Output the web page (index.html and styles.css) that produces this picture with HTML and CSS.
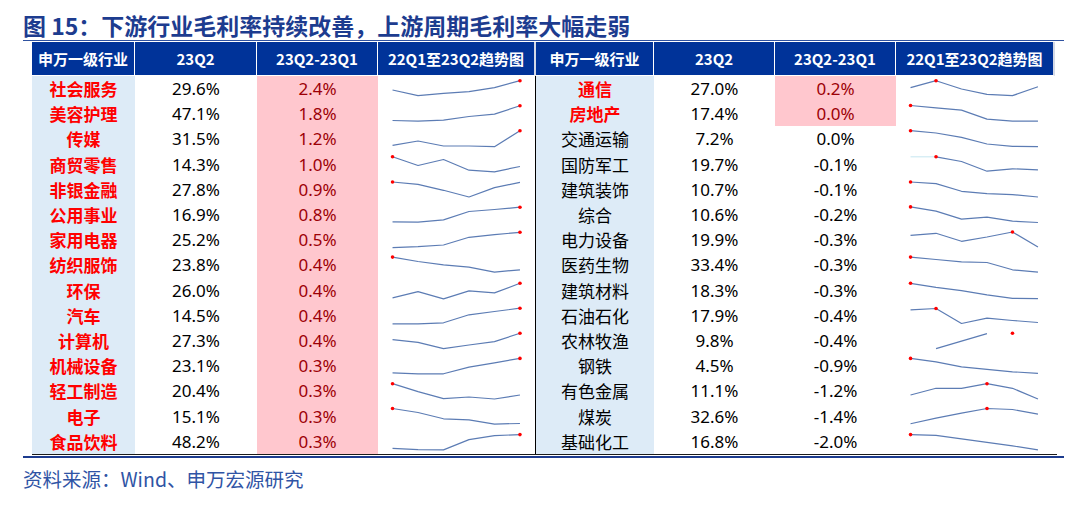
FILE: index.html
```html
<!DOCTYPE html>
<html lang="zh-CN">
<head>
<meta charset="utf-8">
<title>图 15</title>
<link rel="stylesheet" href="styles.css">
</head>
<body>
<div class="page">
  <h1 class="title">图 15：下游行业毛利率持续改善，上游周期毛利率大幅走弱</h1>
  <div class="tables">
    <div class="tbl tbl-left">
      <div class="hd">申万一级行业</div><div class="hd">23Q2</div><div class="hd">23Q2-23Q1</div><div class="hd hd-last">22Q1至23Q2趋势图</div>

      <div class="name red">社会服务</div><div class="num">29.6%</div><div class="num pink">2.4%</div>
      <div class="spark"><svg viewBox="0 0 157 25.2"><polyline points="14.5,14 40,19.7 65.5,17.3 91,15.7 116.5,11.7 142,4.7"/><circle cx="142" cy="4.7" r="1.8"/></svg></div>

      <div class="name red">美容护理</div><div class="num">47.1%</div><div class="num pink">1.8%</div>
      <div class="spark"><svg viewBox="0 0 157 25.2"><polyline points="14.5,19.5 40,20.1 65.5,19.1 91,15.5 116.5,13.1 142,4.8"/><circle cx="142" cy="4.8" r="1.8"/></svg></div>

      <div class="name red">传媒</div><div class="num">31.5%</div><div class="num pink">1.2%</div>
      <div class="spark"><svg viewBox="0 0 157 25.2"><polyline points="14.5,19.4 40,15 65.5,20 91,20 116.5,20.7 142,4.7"/><circle cx="142" cy="4.7" r="1.8"/></svg></div>

      <div class="name red">商贸零售</div><div class="num">14.3%</div><div class="num pink">1.0%</div>
      <div class="spark"><svg viewBox="0 0 157 25.2"><polyline points="14.5,4.8 40,13.5 65.5,7.5 91,18.2 116.5,19.8 142,14.5"/><circle cx="14.5" cy="4.8" r="1.8"/></svg></div>

      <div class="name red">非银金融</div><div class="num">27.8%</div><div class="num pink">0.9%</div>
      <div class="spark"><svg viewBox="0 0 157 25.2"><polyline points="14.5,5 40,7.3 65.5,13.3 91,20 116.5,10.6 142,5.3"/><circle cx="14.5" cy="5" r="1.8"/></svg></div>

      <div class="name red">公用事业</div><div class="num">16.9%</div><div class="num pink">0.8%</div>
      <div class="spark"><svg viewBox="0 0 157 25.2"><polyline points="14.5,19.9 40,20.2 65.5,17.9 91,9.5 116.5,7.5 142,5.2"/><circle cx="142" cy="5.2" r="1.8"/></svg></div>

      <div class="name red">家用电器</div><div class="num">25.2%</div><div class="num pink">0.5%</div>
      <div class="spark"><svg viewBox="0 0 157 25.2"><polyline points="14.5,20.7 40,19.7 65.5,18 91,10.3 116.5,7.7 142,5.3"/><circle cx="142" cy="5.3" r="1.8"/></svg></div>

      <div class="name red">纺织服饰</div><div class="num">23.8%</div><div class="num pink">0.4%</div>
      <div class="spark"><svg viewBox="0 0 157 25.2"><polyline points="14.5,5.1 40,9.5 65.5,12.8 91,15.1 116.5,20.1 142,17.8"/><circle cx="14.5" cy="5.1" r="1.8"/></svg></div>

      <div class="name red">环保</div><div class="num">26.0%</div><div class="num pink">0.4%</div>
      <div class="spark"><svg viewBox="0 0 157 25.2"><polyline points="14.5,19.9 40,13.6 65.5,20.9 91,12.9 116.5,14.9 142,5.3"/><circle cx="142" cy="5.3" r="1.8"/></svg></div>

      <div class="name red">汽车</div><div class="num">14.5%</div><div class="num pink">0.4%</div>
      <div class="spark"><svg viewBox="0 0 157 25.2"><polyline points="14.5,20.8 40,20.8 65.5,19.8 91,11.8 116.5,8.5 142,5.2"/><circle cx="142" cy="5.2" r="1.8"/></svg></div>

      <div class="name red">计算机</div><div class="num">27.3%</div><div class="num pink">0.4%</div>
      <div class="spark"><svg viewBox="0 0 157 25.2"><polyline points="14.5,11.6 40,14.3 65.5,20.6 91,17 116.5,13.6 142,5.3"/><circle cx="142" cy="5.3" r="1.8"/></svg></div>

      <div class="name red">机械设备</div><div class="num">23.1%</div><div class="num pink">0.3%</div>
      <div class="spark"><svg viewBox="0 0 157 25.2"><polyline points="14.5,19.8 40,20.8 65.5,20.8 91,14.1 116.5,9.8 142,5.4"/><circle cx="142" cy="5.4" r="1.8"/></svg></div>

      <div class="name red">轻工制造</div><div class="num">20.4%</div><div class="num pink">0.3%</div>
      <div class="spark"><svg viewBox="0 0 157 25.2"><polyline points="14.5,5.7 40,13.7 65.5,20.7 91,19 116.5,21 142,17"/><circle cx="14.5" cy="5.7" r="1.8"/></svg></div>

      <div class="name red">电子</div><div class="num">15.1%</div><div class="num pink">0.3%</div>
      <div class="spark"><svg viewBox="0 0 157 25.2"><polyline points="14.5,5.5 40,9.5 65.5,15.8 91,16.8 116.5,21.1 142,20.5"/><circle cx="14.5" cy="5.5" r="1.8"/></svg></div>

      <div class="name red">食品饮料</div><div class="num">48.2%</div><div class="num pink">0.3%</div>
      <div class="spark"><svg viewBox="0 0 157 25.2"><polyline points="14.5,19.3 40,20.6 65.5,20.9 91,10.6 116.5,6.6 142,5.6"/><circle cx="142" cy="5.6" r="1.8"/></svg></div>
    </div>

    <div class="tbl tbl-right">
      <div class="hd">申万一级行业</div><div class="hd">23Q2</div><div class="hd">23Q2-23Q1</div><div class="hd hd-last">22Q1至23Q2趋势图</div>

      <div class="name red">通信</div><div class="num">27.0%</div><div class="num pink">0.2%</div>
      <div class="spark"><svg viewBox="0 0 157 25.2"><polyline points="14.5,11.7 40,4.7 65.5,13 91,18.3 116.5,19.7 142,10.7"/><circle cx="40" cy="4.7" r="1.8"/></svg></div>

      <div class="name red">房地产</div><div class="num">17.4%</div><div class="num pink">0.0%</div>
      <div class="spark"><svg viewBox="0 0 157 25.2"><polyline points="14.5,4.5 40,6.8 65.5,9.1 91,18.1 116.5,20.1 142,20.1"/><circle cx="14.5" cy="4.5" r="1.8"/></svg></div>

      <div class="name">交通运输</div><div class="num">7.2%</div><div class="num">0.0%</div>
      <div class="spark"><svg viewBox="0 0 157 25.2"><polyline points="14.5,4.7 40,7 65.5,11.4 91,18 116.5,20.4 142,20.7"/><circle cx="14.5" cy="4.7" r="1.8"/></svg></div>

      <div class="name">国防军工</div><div class="num">19.7%</div><div class="num">-0.1%</div>
      <div class="spark"><svg viewBox="0 0 157 25.2"><polyline class="faint" points="14.5,4.8 40,4.8"/><polyline points="40,4.8 65.5,9.5 91,19.2 116.5,16.8 142,17.8"/><circle cx="40" cy="4.8" r="1.8"/></svg></div>

      <div class="name">建筑装饰</div><div class="num">10.7%</div><div class="num">-0.1%</div>
      <div class="spark"><svg viewBox="0 0 157 25.2"><polyline points="14.5,5 40,6.6 65.5,14.3 91,16.6 116.5,17.6 142,20"/><circle cx="14.5" cy="5" r="1.8"/></svg></div>

      <div class="name">综合</div><div class="num">10.6%</div><div class="num">-0.2%</div>
      <div class="spark"><svg viewBox="0 0 157 25.2"><polyline points="14.5,4.9 40,9.2 65.5,17.2 91,15.2 116.5,19.2 142,20.5"/><circle cx="14.5" cy="4.9" r="1.8"/></svg></div>

      <div class="name">电力设备</div><div class="num">19.9%</div><div class="num">-0.3%</div>
      <div class="spark"><svg viewBox="0 0 157 25.2"><polyline points="14.5,8.3 40,6.3 65.5,14.3 91,10 116.5,5 142,20"/><circle cx="116.5" cy="5" r="1.8"/></svg></div>

      <div class="name">医药生物</div><div class="num">33.4%</div><div class="num">-0.3%</div>
      <div class="spark"><svg viewBox="0 0 157 25.2"><polyline points="14.5,5.1 40,7.5 65.5,9.8 91,10.5 116.5,17.8 142,20.1"/><circle cx="14.5" cy="5.1" r="1.8"/></svg></div>

      <div class="name">建筑材料</div><div class="num">18.3%</div><div class="num">-0.3%</div>
      <div class="spark"><svg viewBox="0 0 157 25.2"><polyline points="14.5,5.3 40,9.3 65.5,12.6 91,16.9 116.5,20.3 142,20.6"/><circle cx="14.5" cy="5.3" r="1.8"/></svg></div>

      <div class="name">石油石化</div><div class="num">17.9%</div><div class="num">-0.4%</div>
      <div class="spark"><svg viewBox="0 0 157 25.2"><polyline points="14.5,6.8 40,5.5 65.5,20.5 91,15.2 116.5,17.5 142,19.5"/><circle cx="40" cy="5.5" r="1.8"/></svg></div>

      <div class="name">农林牧渔</div><div class="num">9.8%</div><div class="num">-0.4%</div>
      <div class="spark"><svg viewBox="0 0 157 25.2"><polyline points="40,20.6 65.5,13.1 91,5.6"/><circle cx="116.5" cy="5.3" r="1.8"/></svg></div>

      <div class="name">钢铁</div><div class="num">4.5%</div><div class="num">-0.9%</div>
      <div class="spark"><svg viewBox="0 0 157 25.2"><polyline points="14.5,5.4 40,8.8 65.5,13.8 91,16.4 116.5,18.8 142,20.4"/><circle cx="14.5" cy="5.4" r="1.8"/></svg></div>

      <div class="name">有色金属</div><div class="num">11.1%</div><div class="num">-1.2%</div>
      <div class="spark"><svg viewBox="0 0 157 25.2"><polyline points="14.5,17 40,10.3 65.5,10.3 91,5.7 116.5,10.3 142,21"/><circle cx="91" cy="5.7" r="1.8"/></svg></div>

      <div class="name">煤炭</div><div class="num">32.6%</div><div class="num">-1.4%</div>
      <div class="spark"><svg viewBox="0 0 157 25.2"><polyline points="14.5,20.8 40,15.1 65.5,10.1 91,5.5 116.5,6.5 142,11.1"/><circle cx="91" cy="5.5" r="1.8"/></svg></div>

      <div class="name">基础化工</div><div class="num">16.8%</div><div class="num">-2.0%</div>
      <div class="spark"><svg viewBox="0 0 157 25.2"><polyline points="14.5,5.6 40,6.3 65.5,9.9 91,13.3 116.5,16.9 142,20.9"/><circle cx="14.5" cy="5.6" r="1.8"/></svg></div>
    </div>
  </div>
  <div class="rule"></div>
  <p class="source">资料来源：Wind、申万宏源研究</p>
</div>
</body>
</html>
```

FILE: styles.css
```css
* { box-sizing: border-box; }

body {
  margin: 0;
  background: #ffffff;
}

.page {
  padding-left: 23px;
  width: 1064px;
}

.title {
  margin: 0;
  padding-top: 10px;
  height: 41px;
  font-family: "Noto Sans CJK SC", sans-serif;
  font-weight: 700;
  font-size: 23px;
  line-height: 30px;
  color: #1d3c8f;
  border-bottom: 1px solid #2f52a0;
  white-space: nowrap;
}

.tables {
  display: flex;
  margin-left: 9px;
  margin-top: 1px;
  width: 1025px;
  border-bottom: 1px solid #1a1a1a;
}

.tbl {
  display: grid;
  grid-template-rows: 34px;
  grid-auto-rows: 25.2px;
}

.tbl-left {
  grid-template-columns: 103px 122px 121px 158px;
}

.tbl-right {
  grid-template-columns: 118px 121px 121px 159px;
}

.hd {
  display: flex;
  align-items: center;
  justify-content: center;
  background: #003399;
  color: #ffffff;
  font-family: "Noto Sans CJK SC", sans-serif;
  font-weight: 700;
  font-size: 15px;
  border-right: 1px solid #ffffff;
  border-bottom: 1px solid #ffffff;
  white-space: nowrap;
}

.hd-last {
  border-right: 2px solid #d4d9e6;
}

.name,
.num {
  display: flex;
  align-items: center;
  justify-content: center;
  font-size: 17px;
  color: #000000;
  white-space: nowrap;
}

.name {
  background: #ddebf7;
  font-family: "Noto Sans CJK SC", sans-serif;
  font-weight: 400;
}

.name.red {
  color: #ff0000;
  font-weight: 700;
}

.num {
  font-family: "Noto Sans", "Noto Sans CJK SC", sans-serif;
  font-weight: 400;
}

.num.pink {
  background: #ffc7ce;
  color: #9c0006;
}

.spark svg {
  display: block;
  width: 157px;
  height: 25.2px;
  overflow: visible;
}

.tbl-left .spark {
  border-right: 1px solid #000000;
}

.spark polyline {
  fill: none;
  stroke: #5c7cb4;
  stroke-width: 1.2;
  stroke-linejoin: round;
}

.spark polyline.faint {
  stroke: #cfeaf3;
}

.spark circle {
  fill: #ff0000;
}

.rule {
  margin-top: 1px;
  height: 2px;
  width: 1041px;
  background: #1c3b8e;
}

.source {
  margin: 9px 0 0;
  font-family: "Noto Sans CJK SC", sans-serif;
  font-weight: 400;
  font-size: 19.5px;
  line-height: 24px;
  color: #2f54a5;
}
```
